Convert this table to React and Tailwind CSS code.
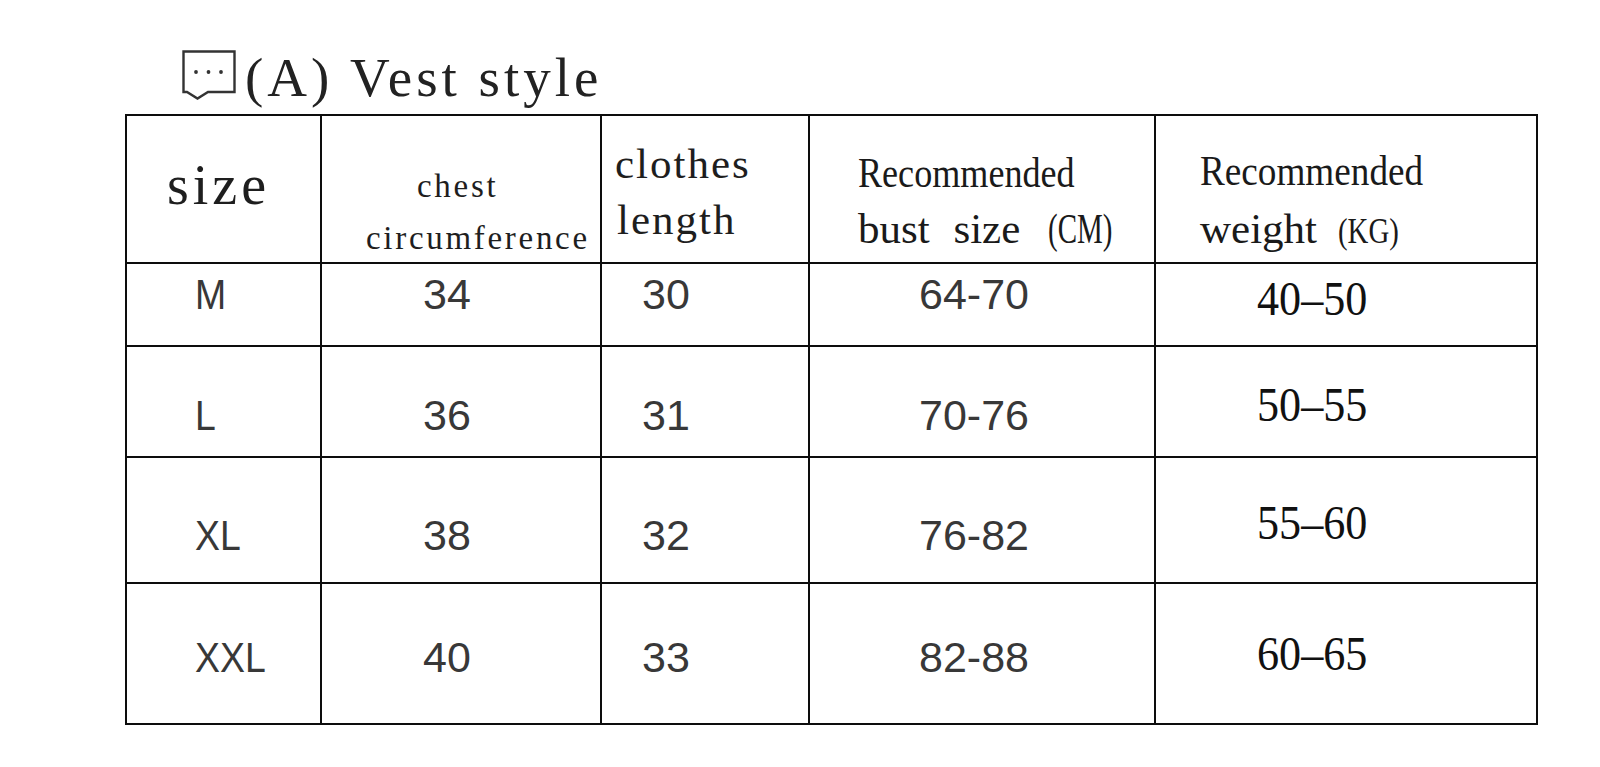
const rows = [
  { size: "M", chest: "34", length: "30", bust: "64-70", weight: "40–50", pad: "pb-[20px]", wpad: "pb-[11px]" },
  { size: "L", chest: "36", length: "31", bust: "70-76", weight: "50–55", pad: "pt-[27px]", wpad: "pt-[6px]" },
  { size: "XL", chest: "38", length: "32", bust: "76-82", weight: "55–60", pad: "pt-[31px]", wpad: "pt-[5px]" },
  { size: "XXL", chest: "40", length: "33", bust: "82-88", weight: "60–65", pad: "pt-[7px]", wpad: "" },
];

const cell = "border-r-2 border-b-2 border-[#0d0d0d]";
const serif = "font-['Liberation_Serif',serif]";
const sans = "font-['Liberation_Sans',sans-serif]";

const BubbleIcon = () => (
  <svg width="54" height="50" viewBox="0 0 54 50" fill="none" stroke="#333" strokeWidth="2.4" strokeLinejoin="miter">
    <path d="M1.5 1.5H52.5V42H26L15.5 48.5L5 42H1.5Z" />
    <circle cx="14" cy="22" r="1.9" fill="#333" stroke="none" />
    <circle cx="26.5" cy="22" r="1.9" fill="#333" stroke="none" />
    <circle cx="39" cy="22" r="1.9" fill="#333" stroke="none" />
  </svg>
);

const ValueCell = ({ children, pl, pad, narrow }) => (
  <div className={`${cell} flex items-center ${pl} ${pad}`}>
    <span
      className={`${sans} inline-block origin-left text-[43px] leading-none text-[#383838] ${
        narrow ? "scale-x-[0.87]" : ""
      }`}
    >
      {children}
    </span>
  </div>
);

export default function App() {
  return (
    <div className="w-[1600px] h-[767px] bg-white overflow-hidden">
      <div className="h-[114px] flex items-start pl-[182px] pt-[50px]">
        <BubbleIcon />
        <div className={`${serif} ml-[9px] text-[55px] leading-[55px] tracking-[4px] text-[#222] whitespace-pre`}>
          (A) Vest style
        </div>
      </div>

      <div className="ml-[125px] w-[1413px] border-l-2 border-t-2 border-[#0d0d0d] grid grid-cols-[195px_280px_208px_346px_382px] grid-rows-[148px_83px_111px_126px_141px]">
        {/* header */}
        <div className={`${cell} pl-[40px] pt-[41px]`}>
          <div className={`${serif} text-[56px] leading-[56px] tracking-[4px] text-[#1e1e1e]`}>size</div>
        </div>
        <div className={`${cell} pt-[44px] ${serif} text-[33px] leading-[52px] tracking-[2.7px] text-[#1e1e1e] whitespace-nowrap`}>
          <div className="pl-[95px]">chest</div>
          <div className="pl-[44px]">circumference</div>
        </div>
        <div className={`${cell} pt-[20px] pl-[13px] ${serif} text-[43px] leading-[56px] tracking-[2px] text-[#1e1e1e] whitespace-nowrap`}>
          <div>clothes</div>
          <div className="pl-[2px]">length</div>
        </div>
        <div className={`${cell} pt-[29px] pl-[48px] ${serif} text-[43px] leading-[56px] text-[#1a1a1a] whitespace-nowrap`}>
          <div>
            <span className="inline-block origin-left scale-x-[0.84]">Recommended</span>
          </div>
          <div className="[word-spacing:13px]">
            bust size{" "}
            <span className="inline-block origin-left scale-x-[0.69] text-[42px] ml-[4px]">(CM)</span>
          </div>
        </div>
        <div className={`${cell} pt-[26px] pl-[44px] ${serif} text-[43px] leading-[58px] text-[#1a1a1a] whitespace-nowrap`}>
          <div>
            <span className="inline-block origin-left scale-x-[0.865]">Recommended</span>
          </div>
          <div>
            weight
            <span className="inline-block origin-left scale-x-[0.8] text-[36px] ml-[21px]">(KG)</span>
          </div>
        </div>

        {/* body */}
        {rows.map((r) => (
          <div key={r.size} className="contents">
            <ValueCell pl="pl-[68px]" pad={r.pad} narrow>{r.size}</ValueCell>
            <ValueCell pl="pl-[101px]" pad={r.pad}>{r.chest}</ValueCell>
            <ValueCell pl="pl-[40px]" pad={r.pad}>{r.length}</ValueCell>
            <ValueCell pl="pl-[109px]" pad={r.pad}>{r.bust}</ValueCell>
            <div className={`${cell} flex items-center pl-[101px] ${r.wpad}`}>
              <span className={`${serif} inline-block origin-left scale-x-[0.92] text-[48px] leading-none text-[#111]`}>
                {r.weight}
              </span>
            </div>
          </div>
        ))}
      </div>
    </div>
  );
}
